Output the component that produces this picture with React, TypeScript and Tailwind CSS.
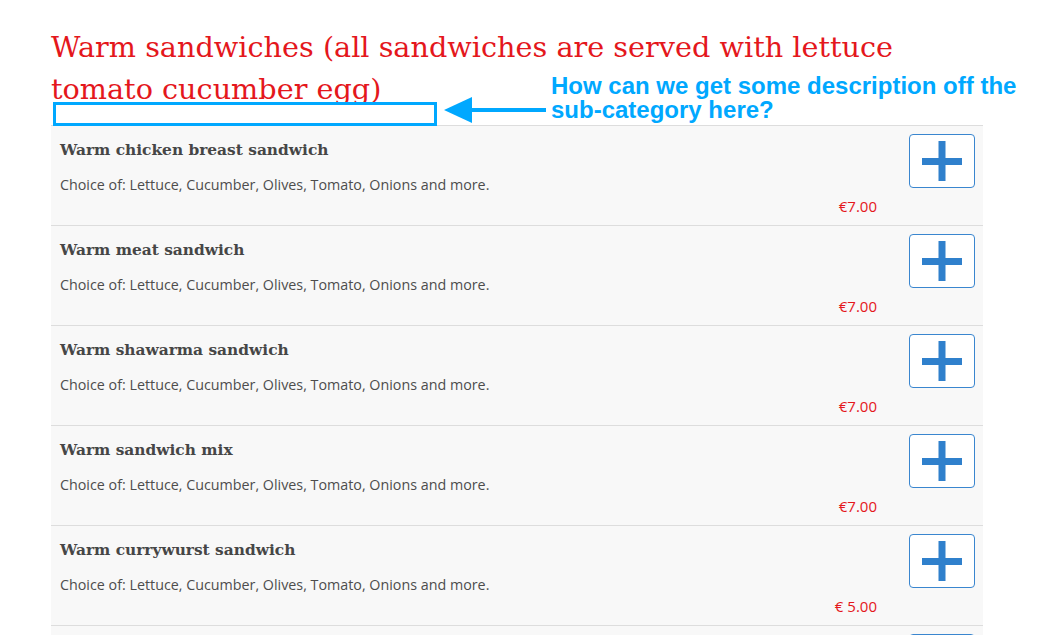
import React from 'react'

const items = [
  { name: 'Warm chicken breast sandwich', price: '€7.00' },
  { name: 'Warm meat sandwich', price: '€7.00' },
  { name: 'Warm shawarma sandwich', price: '€7.00' },
  { name: 'Warm sandwich mix', price: '€7.00' },
  { name: 'Warm currywurst sandwich', price: '€ 5.00' },
]

function PlusButton() {
  return (
    <button className="flex h-[54px] w-[66px] items-center justify-center rounded-[4px] border border-[#3a86cf] bg-white">
      <svg width="40" height="40" viewBox="0 0 40 40">
        <rect x="0" y="17" width="40" height="7" fill="#2f80cc" />
        <rect x="16.5" y="0" width="7" height="40" fill="#2f80cc" />
      </svg>
    </button>
  )
}

export default function App() {
  return (
    <div className="h-[635px] w-[1060px] overflow-hidden bg-white">
      <div className="relative ml-[51px] w-[932px] pt-[26px]">
        <h2 className="text-[28.7px] leading-[42px] text-[#e4171c]" style={{ fontFamily: '"DejaVu Serif", serif' }}>
          Warm sandwiches (all sandwiches are served with lettuce
          <br />
          tomato cucumber egg)
        </h2>
        <div className="h-[15px]" />

        {/* annotation overlay */}
        <div className="absolute left-[2px] top-[102px] h-[24px] w-[384px] border-[3px] border-[#00a8ff]" />
        <svg className="absolute left-[393px] top-[96px]" width="102" height="28" viewBox="0 0 102 28">
          <polygon points="0,14 28,1 28,27" fill="#00a8ff" />
          <rect x="26" y="12" width="76" height="4" fill="#00a8ff" />
        </svg>
        <div
          className="absolute left-[500px] top-[74px] whitespace-nowrap text-[24px] font-bold leading-[24px] text-[#00a8ff]"
          style={{ fontFamily: '"Liberation Sans", Arial, sans-serif' }}
        >
          How can we get some description off the
          <br />
          sub-category here?
        </div>

        <div className="border-t border-[#dddddd]">
          {items.map((item) => (
            <div key={item.name} className="flex h-[100px] border-b border-[#dddddd] bg-[#f8f8f8]">
              <div className="flex flex-1 flex-col pl-[9px] pt-[13px]">
                <div className="text-[15.4px] font-bold leading-[22px] text-[#464646]" style={{ fontFamily: '"DejaVu Serif", serif' }}>
                  {item.name}
                </div>
                <div className="mt-[14px] text-[14.3px] leading-[20px] text-[#4d4d4d]" style={{ fontFamily: '"Open Sans", sans-serif' }}>
                  Choice of: Lettuce, Cucumber, Olives, Tomato, Onions and more.
                </div>
                <div className="mt-[1px] flex justify-end pr-[32px] text-[15px] font-medium leading-[20px] text-[#e4171c]" style={{ fontFamily: '"Open Sans", sans-serif' }}>
                  {item.price}
                </div>
              </div>
              <div className="pr-[8px] pt-[8px]">
                <PlusButton />
              </div>
            </div>
          ))}
          <div className="flex h-[100px] justify-end bg-[#f8f8f8] pr-[8px] pt-[8px]">
            <PlusButton />
          </div>
        </div>
      </div>
    </div>
  )
}
